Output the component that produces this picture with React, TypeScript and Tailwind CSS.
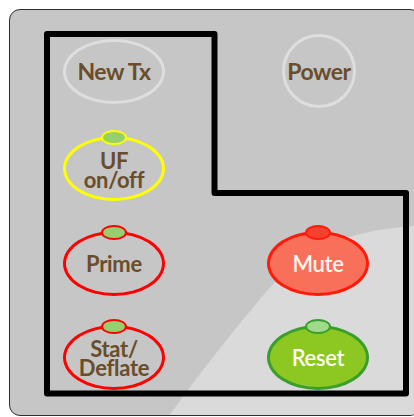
import React from "react";

interface KeyProps {
  label: React.ReactNode;
  ring: string;
  fill: string;
  text: string;
  pill?: string;
}

// oval key with optional status lamp on top
const Key = ({ label, ring, fill, text, pill }: KeyProps) => (
  <div
    className={`relative w-[102px] h-[65px] rounded-[50%] border-[3px] flex items-center justify-center text-center ${ring} ${fill}`}
  >
    {pill && (
      <div
        className={`absolute left-1/2 -translate-x-1/2 -top-[9px] w-[26px] h-[15px] rounded-[50%] border-2 ${pill}`}
      />
    )}
    <span className={`text-[22px] leading-[19px] font-bold tracking-[-0.3px] ${text}`}>{label}</span>
  </div>
);

export default function App() {
  return (
    <div
      className="relative w-[414px] h-[417px] bg-white overflow-hidden"
      style={{ fontFamily: "Lato, 'Open Sans', sans-serif" }}
    >
      <div className="relative ml-[9px] mt-[9px] w-[412px] h-[407px] rounded-[11px] border-[1.5px] border-[#2e2e2e] bg-[#c6c6c6] overflow-hidden">
        {/* lighter sweep in the lower right */}
        <svg className="absolute left-[-10px] top-[-10px]" width="420" height="420" viewBox="0 0 420 420">
          <path
            d="M414 226 C 345 231, 302 250, 266 292 C 232 332, 196 378, 166 420 L 420 420 L 420 226 Z"
            fill="#dadada"
          />
        </svg>

        <div className="relative flex flex-col pl-[53px] pt-[24px]">
          <div className="flex items-center h-[74px]">
            <div className="w-[102px] h-[65px] rounded-[50%] border-[3px] border-[#dedede] flex items-center justify-center">
              <span className="text-[23px] font-bold tracking-[-0.5px] text-[#6a4d2b]">New Tx</span>
            </div>
            <div className="ml-[117px] w-[74px] h-[74px] rounded-full border-[3px] border-[#dedede] flex items-center justify-center">
              <span className="text-[23px] font-bold tracking-[-0.5px] text-[#6a4d2b]">Power</span>
            </div>
          </div>

          <div className="mt-[28px] flex">
            <Key
              label={<>UF<br />on/off</>}
              ring="border-[#ffff00]"
              fill="bg-transparent"
              text="text-[#6a4d2b] pt-[2px]"
              pill="border-[#ffff00] bg-[#95cf6e]"
            />
          </div>

          <div className="mt-[30px] flex">
            <Key
              label="Prime"
              ring="border-[#ff0000]"
              fill="bg-transparent"
              text="text-[#6a4d2b]"
              pill="border-[#ff0000] bg-[#95cf6e]"
            />
            <div className="ml-[102px]">
              <Key
                label="Mute"
                ring="border-[#ff1a0a]"
                fill="bg-[#f8705a]"
                text="text-[#fff6ee] font-semibold"
                pill="border-[#ff1a0a] bg-[#f8402e]"
              />
            </div>
          </div>

          <div className="mt-[29px] flex">
            <Key
              label={<>Stat/<br />Deflate</>}
              ring="border-[#ff0000]"
              fill="bg-transparent"
              text="text-[#6a4d2b] pt-[1px]"
              pill="border-[#ff0000] bg-[#95cf6e]"
            />
            <div className="ml-[102px]">
              <Key
                label="Reset"
                ring="border-[#3a9e2c]"
                fill="bg-[#8cc821]"
                text="text-[#fbfff2] font-semibold"
                pill="border-[#3a9e2c] bg-[#9fd98a]"
              />
            </div>
          </div>
        </div>
      </div>

      {/* highlight outline drawn over the panel */}
      <svg className="absolute left-0 top-0 pointer-events-none" width="414" height="417" viewBox="0 0 414 417">
        <path
          d="M47 34 H214.5 V193 H406 V393.5 H47 Z"
          fill="none"
          stroke="#000"
          strokeWidth="6"
          strokeLinejoin="round"
        />
      </svg>
    </div>
  );
}
